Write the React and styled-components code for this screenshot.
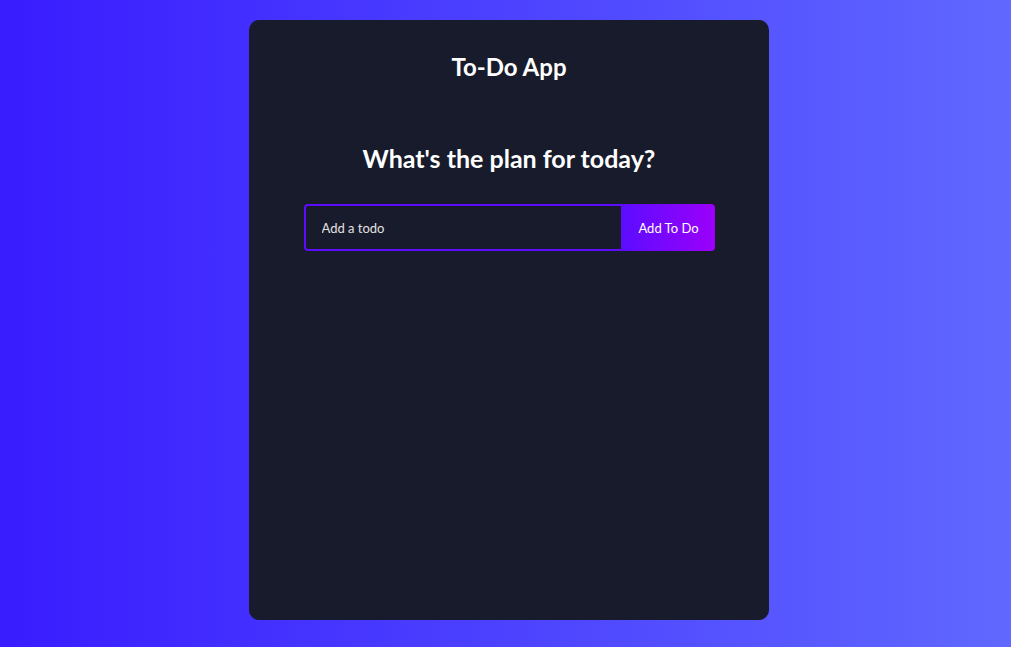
import React, { useState } from "react"
import styled, { createGlobalStyle } from "styled-components"

const GlobalStyle = createGlobalStyle`
  * { box-sizing: border-box; }
  body {
    margin: 0;
    font-family: "Trebuchet MS", Lato, "Noto Sans", sans-serif;
  }
`;

const Page = styled.div`
  min-height: 100vh;
  background: linear-gradient(90deg, #391cff 0%, #6068ff 100%);
  display: flex;
  justify-content: center;
  padding: 20px 0 27px 7px;
`;

const Card = styled.div`
  width: 520px;
  height: 600px;
  background: #181b2b;
  border-radius: 10px;
  display: flex;
  flex-direction: column;
  align-items: center;
  padding-top: 32px;
`;

const Title = styled.div`
  color: #fff;
  font-size: 24px;
  font-weight: bold;
  line-height: 30px;
`;

const Heading = styled.h1`
  color: #fff;
  font-size: 25px;
  line-height: 30px;
  margin: 61px 0 31px;
`;

const Form = styled.form`
  display: flex;
`;

const Input = styled.input`
  width: 319px;
  height: 47px;
  padding: 14px 32px 14px 16px;
  border: 2px solid #5d0cff;
  border-radius: 4px 0 0 4px;
  background: transparent;
  color: #fff;
  font-family: inherit;
  font-size: 13px;
  outline: none;

  &::placeholder { color: #e2e2e2; }
`;

const Button = styled.button`
  width: 92px;
  height: 47px;
  border: none;
  border-radius: 0 4px 4px 0;
  background: linear-gradient(90deg, rgba(93, 12, 255, 1) 0%, rgba(155, 0, 250, 1) 100%);
  color: #fff;
  font-family: inherit;
  font-size: 13px;
  cursor: pointer;
`;

const App = () => {
  const [ text, setText ] = useState("")

  return (<Page>
    <GlobalStyle />
    <Card>
      <Title>To-Do App</Title>
      <Heading>What's the plan for today?</Heading>
      <Form onSubmit={e => { e.preventDefault(); setText("") }}>
        <Input placeholder="Add a todo" value={text} onChange={e => setText(e.target.value)} />
        <Button>Add To Do</Button>
      </Form>
    </Card>
  </Page>)
}

export default App
